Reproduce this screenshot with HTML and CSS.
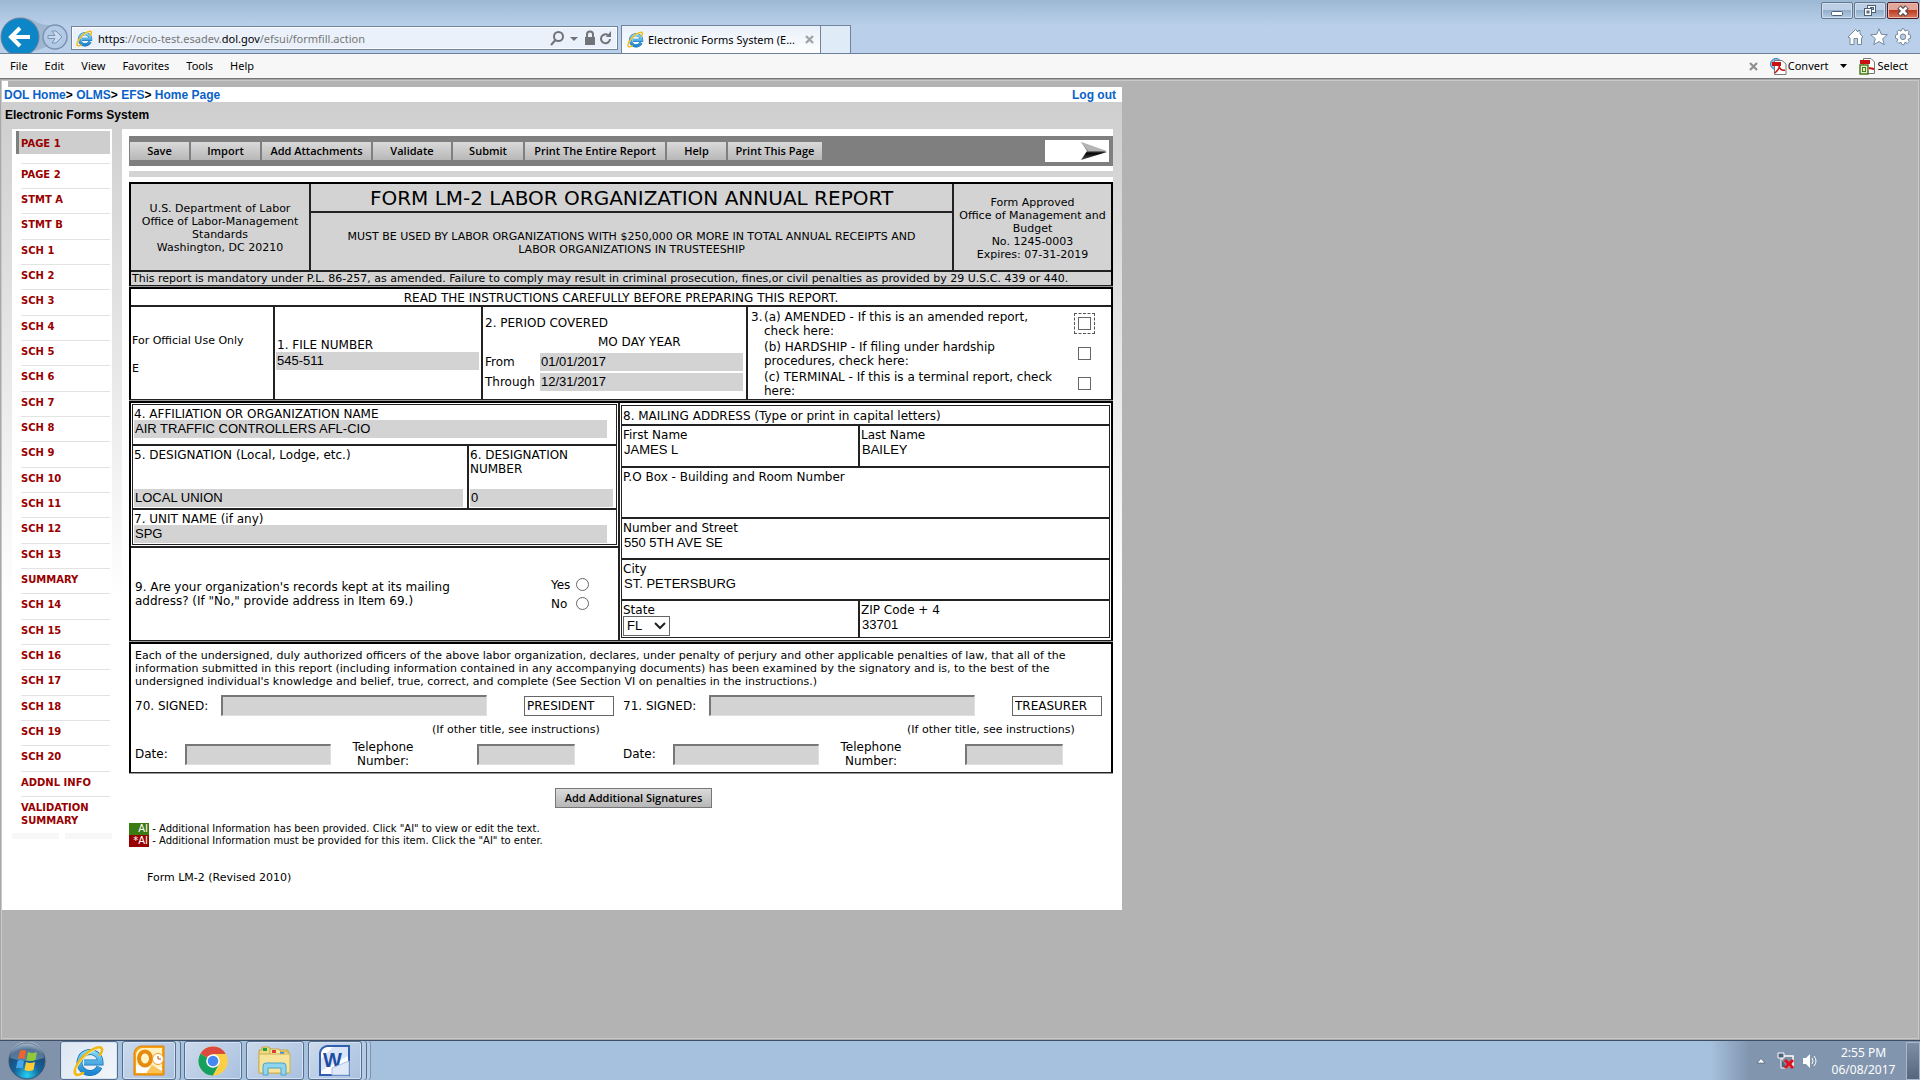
FILE: index.html
```html
<!DOCTYPE html>
<html lang="en">
<head>
<meta charset="utf-8">
<title>Electronic Forms System (EFS)</title>
<link rel="stylesheet" href="styles.css">
</head>
<body>
<svg class="defs" width="0" height="0" aria-hidden="true">
  <defs>
    <linearGradient id="ieBlue" x1="0" y1="0" x2="0" y2="1"><stop offset="0" stop-color="#7fd6f8"/><stop offset="1" stop-color="#1c86cf"/></linearGradient>
    <radialGradient id="orb" cx=".5" cy=".9" r=".9"><stop offset="0" stop-color="#28d0f4"/><stop offset=".4" stop-color="#13649c"/><stop offset=".8" stop-color="#1d4570"/><stop offset="1" stop-color="#8fa9c0"/></radialGradient>
    <linearGradient id="arrowShade" x1="0" y1="0" x2="0" y2="1"><stop offset="0" stop-color="#aaa"/><stop offset=".55" stop-color="#666"/><stop offset=".6" stop-color="#000"/><stop offset="1" stop-color="#555"/></linearGradient>
    <symbol id="ie" viewBox="0 0 32 32">
      <path d="M26.500 22A10.500 10.500 0 1 1 27.500 17.500H11" fill="none" stroke="#1a6fae" stroke-width="6"/>
      <path d="M26.500 22A10.500 10.500 0 1 1 27.500 17.500H11" fill="none" stroke="url(#ieBlue)" stroke-width="4.600"/>
      <path d="M27 10C31 4 29 1 23 3C14 6 4 17 2 25C1 31 5 31 10 28" fill="none" stroke="#f3b90f" stroke-width="2.600" stroke-linecap="round"/>
      <path d="M26 4C18 4 6 16 3 25" fill="none" stroke="#ffe678" stroke-width="1"/>
    </symbol>
  </defs>
</svg>

<header class="chrome">
  <div class="window-buttons">
    <button class="win" aria-label="Minimize"><svg width="30" height="16"><rect x="9.500" y="8.500" width="11" height="4" rx="1" fill="#fff" stroke="#4d5f73"/></svg></button>
    <button class="win" aria-label="Restore"><svg width="30" height="16" fill="#fff" stroke="#4d5f73"><rect x="12.500" y="2.500" width="8" height="7"/><rect x="15.500" y="4.500" width="3" height="2" fill="#9db2c9"/><rect x="9.500" y="5.500" width="7" height="7"/><rect x="12" y="8" width="2" height="2" fill="#9db2c9"/></svg></button>
    <button class="win win-close" aria-label="Close"><svg width="30" height="16"><path d="M11 4L19 12M19 4L11 12" stroke="#54474c" stroke-width="5"/><path d="M11.500 4.500L18.500 11.500M18.500 4.500L11.500 11.500" stroke="#fff" stroke-width="2.500"/></svg></button>
  </div>
  <div class="nav-row">
    <button class="round" aria-label="Back"><svg width="71" height="42"><path d="M22 0C38 2 34 9 56 8L46 30 24 38Z" fill="#8ea6c2" opacity=".6"/><circle cx="20" cy="20" r="19" fill="#0d86c8" stroke="#6a7f99"/><path d="M30 20H12M20 11L11 20L20 29" fill="none" stroke="#fff" stroke-width="4"/><circle cx="55" cy="20" r="12" fill="#b3cae6" stroke="#7c93b0" stroke-width="1.500"/><path d="M48 18.500H55L52 14H56L62 20L56 26H52L55 21.500H48Z" fill="#c8daf0" stroke="#7c93b0"/></svg></button>
    <div class="address">
      <svg width="17" height="17"><use href="#ie"/></svg>
      <span class="url"><b>https</b>://ocio-test.esadev.<b>dol.gov</b>/efsui/formfill.action</span>
      <svg class="address-tools" width="62" height="18" fill="none" stroke="#707478" stroke-width="2"><circle cx="8.500" cy="6.500" r="4.500"/><path d="M5.500 10L1 15"/><path d="M20 7h8l-4 4z" fill="#707478" stroke="none"/><rect x="35" y="7" width="10" height="8" fill="#707478" stroke="none"/><path d="M37 8V4.500a3 3 0 0 1 6 0V8"/><path d="M60 9a4.500 4.500 0 1 1-2-4"/><path d="M56 7h5V1z" fill="#707478" stroke="none"/></svg>
    </div>
    <div class="tab">
      <svg width="17" height="19"><use href="#ie"/></svg>
      <span>Electronic Forms System (E...</span>
      <svg width="9" height="9"><path d="M1 1L8 8M8 1L1 8" stroke="#a0a4a8" stroke-width="2.400"/></svg>
    </div>
    <div class="new-tab"></div>
    <svg class="tools" width="66" height="18" fill="#fff" stroke="#76889c"><path d="M1 9L8.500 1.500L11 4V2.500H13V6L16 9L14.500 10V16.500H10.500V10.500H7V16.500H3V10Z"/><path d="M32 .8l2.300 5.500 6 .4-4.600 4 1.500 6-5.200-3.200-5.200 3.200 1.500-6-4.600-4 6-.4z"/><path d="M57 .8l1 2.300 2.300-1 1.800 1.800-1 2.300 2.400 1v3l-2.400 1 1 2.300-1.800 1.800-2.300-1-1 2.400h-2l-1-2.400-2.300 1-1.800-1.800 1-2.300-2.400-1v-3l2.400-1-1-2.300 1.800-1.800 2.300 1 1-2.300z"/><circle cx="56" cy="8.800" r="2.800" fill="#b6cbe6"/></svg>
  </div>
</header>

<nav class="menubar">
  <a href="#">File</a><a href="#">Edit</a><a href="#">View</a><a href="#">Favorites</a><a href="#">Tools</a><a href="#">Help</a>
  <div class="menu-tools">
    <svg width="9" height="9"><path d="M1 1L8 8M8 1L1 8" stroke="#8f8f8f" stroke-width="2.200"/></svg>
    <a href="#" class="convert"><svg width="17" height="17"><circle cx="6" cy="6" r="5.500" fill="#8fc4ea" stroke="#3c78b4"/><path d="M4.500 2.500H12L16 6V16.500H4.500Z" fill="#fff" stroke="#777"/><path d="M2 4H11V8H2Z" fill="#c11"/><path d="M5 15C8 12 10 9 9 7C9 11 12 13 15 12" fill="none" stroke="#c11" stroke-width="1.500"/></svg>Convert</a>
    <svg width="7" height="5"><path d="M0 0H7L3.500 4Z" fill="#000"/></svg>
    <a href="#" class="convert"><svg width="17" height="17"><path d="M4.500.5H12L15.500 4V15.500H4.500Z" fill="#fff" stroke="#777"/><path d="M1 2H11V6H1Z" fill="#c11"/><path d="M10 10L15 11" stroke="#c11" stroke-width="2"/><rect x="1" y="7" width="8" height="9" fill="#e6f0cf" stroke="#4b7a1d" stroke-width="1.500"/><rect x="3.500" y="9.500" width="3" height="4" fill="none" stroke="#4b7a1d"/></svg>Select</a>
  </div>
</nav>

<main class="viewport">
  <div class="page">
    <div class="corner"></div>
    <div class="crumbs">
      <div><a href="#">DOL Home</a>&gt; <a href="#">OLMS</a>&gt; <a href="#">EFS</a>&gt; <a href="#">Home Page</a></div>
      <a href="#">Log out</a>
    </div>
    <div class="backdrop">
      <h1 class="system">Electronic Forms System</h1>
      <div class="columns">
        <nav class="sections">
          <ul>
            <li class="current"><a href="#">PAGE 1</a></li>
            <li><a href="#">PAGE 2</a></li><li><a href="#">STMT A</a></li><li><a href="#">STMT B</a></li>
            <li><a href="#">SCH 1</a></li><li><a href="#">SCH 2</a></li><li><a href="#">SCH 3</a></li><li><a href="#">SCH 4</a></li>
            <li><a href="#">SCH 5</a></li><li><a href="#">SCH 6</a></li><li><a href="#">SCH 7</a></li><li><a href="#">SCH 8</a></li>
            <li><a href="#">SCH 9</a></li><li><a href="#">SCH 10</a></li><li><a href="#">SCH 11</a></li><li><a href="#">SCH 12</a></li>
            <li><a href="#">SCH 13</a></li><li><a href="#">SUMMARY</a></li><li><a href="#">SCH 14</a></li><li><a href="#">SCH 15</a></li>
            <li><a href="#">SCH 16</a></li><li><a href="#">SCH 17</a></li><li><a href="#">SCH 18</a></li><li><a href="#">SCH 19</a></li>
            <li><a href="#">SCH 20</a></li><li><a href="#">ADDNL INFO</a></li><li><a href="#">VALIDATION<br>SUMMARY</a></li>
          </ul>
          <div class="nav-foot"><span></span><span></span></div>
        </nav>

        <form class="sheet">
          <div class="toolbar">
            <button type="button">Save</button><button type="button">Import</button><button type="button">Add Attachments</button><button type="button">Validate</button><button type="button">Submit</button><button type="button">Print The Entire Report</button><button type="button">Help</button><button type="button">Print This Page</button>
            <button type="button" class="next" aria-label="Next page"><svg width="28" height="20"><path d="M1 1L27 11L1 19L7 10Z" fill="url(#arrowShade)"/><path d="M1 1L27 10L8 10Z" fill="#b4b4b4"/></svg></button>
          </div>
          <div class="strip"></div>

          <section class="block head">
            <div class="agency small">U.S. Department of Labor<br>Office of Labor-Management Standards<br>Washington, DC 20210</div>
            <h2 class="title">FORM LM-2 LABOR ORGANIZATION ANNUAL REPORT</h2>
            <div class="approved small">Form Approved<br>Office of Management and Budget<br>No. 1245-0003<br>Expires: 07-31-2019</div>
            <p class="must small">MUST BE USED BY LABOR ORGANIZATIONS WITH $250,000 OR MORE IN TOTAL ANNUAL RECEIPTS AND<br>LABOR ORGANIZATIONS IN TRUSTEESHIP</p>
            <p class="law small">This report is mandatory under P.L. 86-257, as amended. Failure to comply may result in criminal prosecution, fines,or civil penalties as provided by 29 U.S.C. 439 or 440.</p>
          </section>

          <section class="block ident">
            <p class="read">READ THE INSTRUCTIONS CAREFULLY BEFORE PREPARING THIS REPORT.</p>
            <div class="official small"><p>For Official Use Only</p><p>E</p></div>
            <div class="file"><label for="fileno">1. FILE NUMBER</label><input id="fileno" class="field gray" value="545-511" readonly></div>
            <div class="period">
              <p>2. PERIOD COVERED</p>
              <p class="mdy">MO DAY YEAR</p>
              <div class="pair"><label for="from">From</label><input id="from" class="field gray" value="01/01/2017" readonly></div>
              <div class="pair"><label for="thru">Through</label><input id="thru" class="field gray" value="12/31/2017" readonly></div>
            </div>
            <div class="checks">
              <span>3.</span><label for="ca">(a) AMENDED - If this is an amended report, check here:</label><span class="focus"><input type="checkbox" id="ca"></span>
              <span></span><label for="cb">(b) HARDSHIP - If filing under hardship procedures, check here:</label><span><input type="checkbox" id="cb"></span>
              <span></span><label for="cc">(c) TERMINAL - If this is a terminal report, check here:</label><span><input type="checkbox" id="cc"></span>
            </div>
          </section>

          <section class="block detail">
            <div class="left">
              <div class="org">
                <div class="cell wide name"><label for="aff">4. AFFILIATION OR ORGANIZATION NAME</label><input id="aff" class="field gray" value="AIR TRAFFIC CONTROLLERS AFL-CIO" readonly></div>
                <div class="cell split"><label for="des">5. DESIGNATION (Local, Lodge, etc.)</label><input id="des" class="field gray" value="LOCAL UNION" readonly></div>
                <div class="cell split number"><label for="desno">6. DESIGNATION NUMBER</label><input id="desno" class="field gray" value="0" readonly></div>
                <div class="cell wide name"><label for="unit">7. UNIT NAME (if any)</label><input id="unit" class="field gray" value="SPG" readonly></div>
              </div>
              <div class="records">
                <p>9. Are your organization's records kept at its mailing address? (If "No," provide address in Item 69.)</p>
                <div class="radios">
                  <label for="ry">Yes</label><input type="radio" name="records" id="ry">
                  <label for="rn">No</label><input type="radio" name="records" id="rn">
                </div>
              </div>
            </div>
            <div class="right">
              <div class="mail">
                <p class="cell wide">8. MAILING ADDRESS (Type or print in capital letters)</p>
                <div class="cell"><label for="fn">First Name</label><input id="fn" class="field" value="JAMES L"></div>
                <div class="cell"><label for="ln">Last Name</label><input id="ln" class="field" value="BAILEY"></div>
                <div class="cell wide"><label for="po">P.O Box - Building and Room Number</label><input id="po" class="field" value=""></div>
                <div class="cell wide"><label for="st">Number and Street</label><input id="st" class="field" value="550 5TH AVE SE"></div>
                <div class="cell wide"><label for="city">City</label><input id="city" class="field" value="ST. PETERSBURG"></div>
                <div class="cell"><label for="state">State</label><span class="select"><select id="state"><option>FL</option></select><svg width="12" height="8"><path d="M1 1L6 6L11 1" fill="none" stroke="#222" stroke-width="2"/></svg></span></div>
                <div class="cell"><label for="zip">ZIP Code + 4</label><input id="zip" class="field" value="33701"></div>
              </div>
            </div>
          </section>

          <section class="block oath">
            <p class="small">Each of the undersigned, duly authorized officers of the above labor organization, declares, under penalty of perjury and other applicable penalties of law, that all of the<br>information submitted in this report (including information contained in any accompanying documents) has been examined by the signatory and is, to the best of the<br>undersigned individual's knowledge and belief, true, correct, and complete (See Section VI on penalties in the instructions.)</p>
            <div class="signers">
              <div class="signer">
                <div class="signed"><label for="s70">70. SIGNED:</label><input id="s70" class="sunk" disabled><input class="post" aria-label="Title of item 70" value="PRESIDENT"></div>
                <p class="note small">(If other title, see instructions)</p>
                <div class="contact"><label for="d70">Date:</label><input id="d70" class="sunk" disabled><label for="t70" class="phone">Telephone Number:</label><input id="t70" class="sunk" disabled></div>
              </div>
              <div class="signer second">
                <div class="signed"><label for="s71">71. SIGNED:</label><input id="s71" class="sunk" disabled><input class="post" aria-label="Title of item 71" value="TREASURER"></div>
                <p class="note small">(If other title, see instructions)</p>
                <div class="contact"><label for="d71">Date:</label><input id="d71" class="sunk" disabled><label for="t71" class="phone">Telephone Number:</label><input id="t71" class="sunk" disabled></div>
              </div>
            </div>
          </section>

          <button type="button" class="more">Add Additional Signatures</button>
          <p class="legend"><span class="ai green">AI</span> - Additional Information has been provided. Click "AI" to view or edit the text.</p>
          <p class="legend"><span class="ai red">*AI</span> - Additional Information must be provided for this item. Click the "AI" to enter.</p>
          <p class="revision small">Form LM-2 (Revised 2010)</p>
        </form>
      </div>
    </div>
  </div>
</main>

<footer class="taskbar">
  <button class="start" aria-label="Start"><svg width="38" height="38"><circle cx="19" cy="19" r="18" fill="url(#orb)" stroke="#39536f"/><path d="M2 16A17 17 0 0 1 36 16Q19 22 2 16Z" fill="#fff" opacity=".25"/><path d="M12 9Q15 7 18 9L16.500 17Q13 15.500 10 17Z" fill="#f0632a"/><path d="M20 10Q24 12 29 10L27.500 18Q23 20 18.500 18Z" fill="#90c83c"/><path d="M9.500 19Q12.500 17 16 19L14.500 26.500Q11 25 8 26.500Z" fill="#46a7e8"/><path d="M18 20Q22 22 27 20L25.500 28Q21 30 16.500 28Z" fill="#fccb35"/></svg></button>
  <button class="task active" aria-label="Internet Explorer"><svg width="32" height="32"><use href="#ie"/></svg></button>
  <button class="task stack" aria-label="Outlook"><svg width="32" height="32"><path d="M8 1H31V30H1V8Q2 2 8 1Z" fill="#f6a313" stroke="#dd7e09"/><path d="M9 3H29V28H3V9Q4 4 9 3Z" fill="#fff0bd"/><path d="M3 20L29 23V28H3Z" fill="#fff"/><ellipse cx="12" cy="13.500" rx="6" ry="7" fill="#fff3c8" stroke="#e58a0c" stroke-width="4"/><circle cx="25" cy="14" r="5.500" fill="#fff" stroke="#ee9b20"/><path d="M25 11V14H28" fill="none" stroke="#b05a00"/><path d="M14 27L19 20L29 26V28H14Z" fill="#fbc25a"/></svg></button>
  <button class="task" aria-label="Chrome"><svg width="30" height="30" viewBox="-15 -15 30 30"><circle r="14.500" fill="#fc4"/><path d="M0 0L-12.560-7.250A14.500 14.500 0 0 1 12.560-7.250Z" fill="#dc4a3d"/><path d="M-12.560-7.250A14.500 14.500 0 0 0-0 14.500L6.500 3.500L0 0Z" fill="#15a05f"/><path d="M0-7H12.600A14.500 14.500 0 0 1 0 14.500L6 3Z" fill="#fdcf45"/><circle r="6.800" fill="#fff"/><circle r="5.300" fill="#4587f3"/></svg></button>
  <button class="task" aria-label="Explorer"><svg width="34" height="32"><path d="M1 5H4V2H11L13 5H30V28H1Z" fill="#f1d77c" stroke="#c5a545"/><path d="M12 4H21L23 7H31V12H12Z" fill="#f8e9a8" stroke="#c5a545"/><rect x="5" y="3" width="4" height="3" fill="#1aa53a"/><rect x="14" y="5" width="4" height="3" fill="#d8412f"/><rect x="22" y="7" width="4" height="3" fill="#3a91dd"/><path d="M1 9H32V28H1Z" fill="#f7e399" stroke="#cdb055"/><path d="M5 30V21Q5 18 8 18H25Q28 18 28 21V30H23V23H10V30Z" fill="#90d5ee" stroke="#4aa3c9"/></svg></button>
  <button class="task stack double" aria-label="Word"><svg width="32" height="32"><path d="M8 1H30V30H1V8Q2 2 8 1Z" fill="#fff" stroke="#2f5fae" stroke-width="2"/><path d="M2 14L14 2H29V11L2 26Z" fill="#c9daf3" opacity=".7"/><text x="4" y="22" class="word-mark">W</text><path d="M13 30V23L30 16V30Z" fill="#dfe9f8" stroke="#a9bfe0"/></svg></button>
  <div class="tray">
    <svg width="64" height="20"><path d="M0 12L4 7.500L8 12Z" fill="#fff" stroke="#41536a" stroke-width=".6"/><path d="M25 5H36V15H25Z" fill="#7d8ea3" stroke="#fff" stroke-width="1.500"/><path d="M21 2H27V7H21ZM24 7V17H30" fill="#516178" stroke="#fff"/><path d="M28 9L36 17M36 9L28 17" stroke="#e0111b" stroke-width="3"/><path d="M46 7H49L53 3V17L49 13H46Z" fill="#fff"/><path d="M55 7Q57 10 55 13M57 5Q61 10 57 15" fill="none" stroke="#fff"/></svg>
    <div class="clock">2:55 PM<br>06/08/2017</div>
    <div class="desktop"></div>
  </div>
</footer>
</body>
</html>
```
FILE: styles.css
```css
* { box-sizing: border-box; }
body {
  margin: 0;
  min-height: 100vh;
  display: flex;
  flex-direction: column;
  background: #b3b3b3;
  color: #000;
  font: 12px/14px "DejaVu Sans", sans-serif;
}
h1, h2, p, ul { margin: 0; padding: 0; font-weight: normal; }
a { text-decoration: none; }
svg { display: block; flex: none; }
button, input, select { font: inherit; color: inherit; margin: 0; padding: 0; border: 0; background: none; border-radius: 0; }
label { display: block; }
.defs { position: absolute; }

/* Browser frame */
.chrome, .menubar, .clock { font-family: "Noto Sans", sans-serif; }
.chrome {
  height: 54px;
  background: linear-gradient(#9db8d3, #bad0ea 26px);
  border-bottom: 1px solid #6c8099;
}
.window-buttons { display: flex; justify-content: flex-end; gap: 1px; height: 17px; padding: 2px 1px 0 0; }
.win {
  height: 17px;
  border: 1px solid #64788f;
  border-radius: 2px;
  background: linear-gradient(#bccfe4 45%, #94afcc 50%, #b3cbe4);
  box-shadow: inset 0 0 0 1px #d0deee;
}
.win-close { border-color: #4c1920; background: linear-gradient(#e3a69b 45%, #bf3b22 50%, #d77a5c); box-shadow: inset 0 0 0 1px #e9b9ae; }
.nav-row { display: flex; height: 36px; align-items: flex-end; }
.round { align-self: flex-start; height: 36px; width: 71px; overflow: hidden; }
.address {
  display: flex;
  align-items: center;
  gap: 5px;
  width: 547px;
  height: 24px;
  margin: 0 3px 3px 0;
  padding: 1px 5px 0 4px;
  border: 1px solid #71849c;
  background: #eaf1fa;
  box-shadow: inset 0 0 0 1px #fbfdff;
}
.url { flex: 1; color: #777; font-size: 11px; white-space: nowrap; }
.url b { font-weight: normal; color: #000; }
.tab {
  display: flex;
  align-items: center;
  gap: 4px;
  width: 200px;
  height: 28px;
  padding: 0 6px 0 5px;
  border: 1px solid #71849c;
  border-bottom: 0;
  background: linear-gradient(#e9f0fa, #fff);
  font-size: 11px;
}
.tab span { flex: 1; white-space: nowrap; }
.new-tab { width: 30px; height: 28px; border: 1px solid #71849c; border-width: 1px 1px 0 0; background: #e0ebf8; }
.tools { margin: 0 7px 7px auto; }
.menubar {
  display: flex;
  align-items: center;
  gap: 17px;
  height: 25px;
  padding: 0 12px 0 10px;
  background: #f7f7f7;
  border-bottom: 1px solid #767676;
  font-size: 11px;
}
.menubar a { color: #000; }
.menu-tools { display: flex; align-items: center; gap: 12px; margin-left: auto; }
.convert { display: flex; align-items: center; gap: 1px; }

/* Page */
.viewport { flex: 1; border: 1px solid #a8a8a8; box-shadow: inset 0 0 0 1px #c8c8c8; padding: 1px; }
.page { width: 100%; max-width: 1120px; background: #fff; }
.corner { height: 6px; background: #b3b3b3; border-left: 6px solid #fff; }
.crumbs { display: flex; justify-content: space-between; height: 15px; padding: 0 6px 0 2px; font: bold 12px/16px "Liberation Sans", sans-serif; }
.crumbs a { color: #0a62c9; }
.backdrop { padding: 0 10px; background: linear-gradient(#cecece, #fff 500px); }
.system { height: 27px; margin-left: -7px; font: bold 12px/26px "Liberation Sans", sans-serif; }
.columns { display: flex; align-items: flex-start; gap: 10px; }
.sections { width: 100px; background: #fff; }
.sections ul { list-style: none; padding: 2px 2px 0 4px; }
.sections li { height: 25px; margin-left: 5px; border-top: 1px solid #e3e3e3; padding-top: 4px; font: bold 10px/13px "DejaVu Sans", sans-serif; }
.sections li:nth-child(3n+1) { height: 26px; }
.sections li a { color: #900; }
.sections li:first-child { height: 23px; margin: 0 0 9px; padding: 6px 0 0 2px; border: 0; border-left: 3px solid #7f7f7f; background: #cecece; }
.sections li:last-child { height: 37px; }
.nav-foot { display: flex; gap: 6px; }
.nav-foot span { flex: 1; height: 6px; background: #f7f7f7; }

.sheet { flex: 1; min-width: 0; padding: 7px 0 0 7px; background: #fff; min-height: 781px; margin-right: -1px; }
.small { font-size: 11px; line-height: 13px; }
.toolbar {
  display: grid;
  grid-template-columns: 59px 69px 109px 78px 70px 140px 59px 94px 1fr;
  gap: 2px;
  align-items: center;
  height: 30px;
  padding: 0 4px 0 1px;
  background: #7f7f7f;
}
.toolbar button, .more { height: 18px; background: linear-gradient(#dadada, #b7b7b7); font: 600 11px/18px "Open Sans", sans-serif; white-space: nowrap; }
.toolbar .next { display: flex; justify-content: flex-end; align-items: center; justify-self: end; width: 64px; height: 22px; padding-right: 1px; background: #fff; }
.strip { height: 6px; margin: 5px 0; background: #d3d3d3; }

/* Ruled blocks: cells sit on a dark ground and the gaps show as rules */
.block {
  border: 2px solid #000;
  border-bottom: 1px solid #222;
  box-shadow: 0 1px #999;
  margin-bottom: 1px;
  background: #222;
  display: grid;
  gap: 2px;
}
.head { grid-template-columns: 178px 1fr 157px; grid-template-rows: 27px 57px 13px; text-align: center; }
.head > * { display: grid; place-content: center; background: #d3d3d3; }
.head .agency, .head .approved { grid-row: 1 / 3; display: block; align-content: center; padding-top: 2px; }
.approved { grid-column: 3; }
.title { font-size: 20px; line-height: 22px; white-space: nowrap; }
.must { grid-column: 2; grid-row: 2; padding-top: 2px; }
.head .law { grid-column: 1 / 4; place-content: center start; padding-left: 1px; line-height: 15px; white-space: nowrap; }

.ident { grid-template-columns: 142px 206px 263px 1fr; grid-template-rows: 16px 92px; }
.ident > * { background: #fff; }
.read { grid-column: 1 / 5; text-align: center; line-height: 18px; }
.official { padding: 27px 1px; }
.official p + p { margin-top: 15px; }
.file { padding: 31px 2px 0 1px; }
.file label { padding-left: 1px; }
.field { display: block; width: 100%; height: 18px; padding: 0 1px; font: 13px/18px "Liberation Sans", sans-serif; }
.gray { background: #d3d3d3; }
.period { padding: 9px 3px 0 2px; }
.mdy { margin: 5px 0 4px 113px; }
.pair { display: grid; grid-template-columns: 55px 1fr; align-items: center; margin-bottom: 2px; }
.checks { display: grid; grid-template-columns: 13px 1fr 54px; grid-auto-rows: 30px; padding: 3px 0 0 3px; }
.checks label { max-width: 305px; }
.checks > :nth-child(3n) { display: grid; place-content: center; padding-bottom: 4px; }
.focus::before { content: ""; grid-area: 1 / 1; width: 19px; height: 19px; border: 1px dashed #555; }
.focus input { grid-area: 1 / 1; place-self: center; }
input[type="checkbox"] { appearance: none; width: 13px; height: 13px; border: 1px solid #666; background: #fff; }
input[type="radio"] { appearance: none; width: 13px; height: 13px; border: 1px solid #666; border-radius: 50%; background: #fff; }

.detail { grid-template-columns: 487px 1fr; }
.left { display: grid; grid-template-rows: 143px 92px; gap: 2px; }
.left, .right { min-width: 0; }
.org, .mail { display: grid; gap: 2px; background: #222; border: 1px solid #222; outline: 1px solid #fff; margin: 1px; }
.right { background: #fff; padding: 1px 0; }
.org { grid-template-columns: 1fr 147px; grid-template-rows: 39px 62px 34px; }
.cell { background: #fff; padding: 1px 1px 0; }
.cell label { height: 14px; line-height: 16px; }
.wide { grid-column: 1 / 3; }
.name { padding-right: 9px; }
.split { display: flex; flex-direction: column; justify-content: space-between; padding: 2px 4px 1px 1px; }
.split.number { padding-right: 3px; }
.split label { height: auto; line-height: 14px; }
.records { display: flex; justify-content: space-between; align-items: center; padding: 0 29px 0 4px; background: #fff; }
.records p { width: 345px; }
.radios { display: grid; grid-template-columns: 24px 13px; gap: 5px 1px; align-items: center; }
.mail { grid-template-columns: 236px 1fr; grid-template-rows: 18px 40px 49px 39px 39px 36px; }
.mail p { line-height: 18px; }
.select { display: flex; align-items: center; justify-content: space-between; width: 47px; height: 20px; padding: 0 3px; border: 1px solid #666; font: 13px/18px "Liberation Sans", sans-serif; }
.select select { appearance: none; width: 24px; height: 18px; }

.oath { display: block; background: #fff; height: 131px; padding: 5px 0 0 4px; white-space: nowrap; }
.signers { display: grid; grid-template-columns: 488px 1fr; margin-top: 7px; }
.signed { display: grid; grid-template-columns: 86px 266px 127px; align-items: center; }
.post { width: 90px; height: 20px; padding: 0 2px; justify-self: end; border: 1px solid #666; background: #fff; }
.sunk { height: 21px; background: #d3d3d3; border: solid; border-width: 2px 1px 1px 2px; border-color: #777 #e0e0e0 #e0e0e0 #777; }
.note { padding: 7px 0 4px 297px; }
.second .note { padding-left: 284px; }
.contact { display: grid; grid-template-columns: 50px 146px 146px 98px; align-items: center; }
.phone { width: 80px; margin-left: 12px; text-align: center; white-space: normal; }
.more { display: block; width: 157px; height: 20px; margin: 15px 0 15px 426px; border: 1px solid #777; }
.legend { font-size: 10px; line-height: 12px; white-space: nowrap; }
.ai { display: inline-block; width: 20px; padding-right: 1px; color: #fff; text-align: right; }
.green { background: #3c7a12; }
.red { background: #900; }
.revision { padding: 24px 0 0 18px; }

/* Taskbar */
.taskbar {
  display: flex;
  height: 40px;
  border-top: 1px solid #3d4f66;
  background: linear-gradient(90deg, #8093ab 0 60px, #a6c1de 62px calc(100% - 210px), #8195ae calc(100% - 170px));
}
.start { width: 60px; padding-left: 8px; }
.task {
  display: grid;
  place-content: center;
  width: 58px;
  margin-right: 4px;
  border: 1px solid #566f8f;
  border-radius: 3px;
  background: linear-gradient(135deg, #ccdaec, #a9c1df);
  box-shadow: inset 0 0 0 1px #d5e2f1;
}
.active { background: linear-gradient(135deg, #dce6f2, #f2f6fa); }
.stack { width: 54px; margin-right: 8px; box-shadow: inset 0 0 0 1px #d5e2f1, 4px 0 0 #b6cbe4, 5px 0 0 #566f8f; }
.double { box-shadow: inset 0 0 0 1px #d5e2f1, 4px 0 0 #b6cbe4, 5px 0 0 #566f8f, 8px 0 0 #b6cbe4, 9px 0 0 #7b92b0; }
.word-mark { font: bold 20px "Liberation Sans", sans-serif; fill: #1d4da0; }
.tray { display: flex; align-items: center; margin-left: auto; }
.clock { width: 85px; color: #fff; text-align: center; line-height: 17px; }
.desktop { width: 14px; height: 38px; border: 1px solid #a9b9cb; background: linear-gradient(#7d8fa4, #56677d); }
```
